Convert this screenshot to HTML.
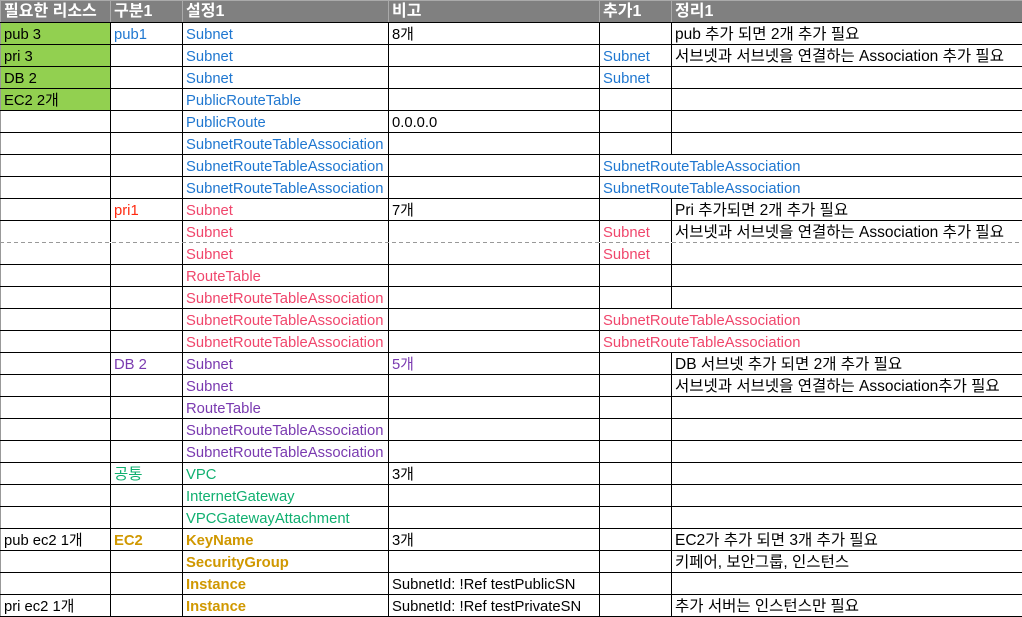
<!DOCTYPE html>
<html><head><meta charset="utf-8"><style>
body{margin:0;width:1022px;height:616px;overflow:hidden;background:#fff;font-family:"Liberation Sans","Noto Sans CJK KR",sans-serif;}
table{border-collapse:collapse;table-layout:fixed;position:absolute;left:0;top:0;width:1022px;}
td{height:22px;padding:3px 0 0 3px;box-sizing:border-box;border:1px solid #000;font-size:14.8px;white-space:nowrap;overflow:visible;line-height:18px;color:#000;}
td:first-child{border-left:1px solid #999;}
tr.h td{background:#808080;color:#fff;font-weight:bold;font-size:16px;border-color:#aaa;border-bottom:1px solid #000;padding-top:1px;}
.g{background:#92d050;}
.b{color:#1f77d0}.p{color:#f0466c}.r{color:#ff2a10}.v{color:#7a3ab0}.gr{color:#10b070}.y{color:#d09800;font-weight:bold}
.nr{border-right:none}
.k{font-size:15.5px}
#dash{position:absolute;left:0;top:242px;width:1022px;height:1px;background:repeating-linear-gradient(90deg,#999 0 4px,#fff 4px 7px);}
</style></head><body>
<table>
<colgroup><col style="width:110px"><col style="width:72px"><col style="width:206px"><col style="width:211px"><col style="width:72px"><col style="width:351px"></colgroup>
<tr class="h"><td>필요한 리소스</td><td>구분1</td><td>설정1</td><td>비고</td><td>추가1</td><td>정리1</td></tr>
<tr><td class="g">pub 3</td><td class="b">pub1</td><td class="b">Subnet</td><td>8개</td><td></td><td class="k">pub 추가 되면 2개 추가 필요</td></tr>
<tr><td class="g">pri 3</td><td></td><td class="b">Subnet</td><td></td><td class="b">Subnet</td><td class="k">서브넷과 서브넷을 연결하는 Association 추가 필요</td></tr>
<tr><td class="g">DB 2</td><td></td><td class="b">Subnet</td><td></td><td class="b">Subnet</td><td></td></tr>
<tr><td class="g">EC2 2개</td><td></td><td class="b">PublicRouteTable</td><td></td><td></td><td></td></tr>
<tr><td></td><td></td><td class="b">PublicRoute</td><td>0.0.0.0</td><td></td><td></td></tr>
<tr><td></td><td></td><td class="b">SubnetRouteTableAssociation</td><td></td><td></td><td></td></tr>
<tr><td></td><td></td><td class="b">SubnetRouteTableAssociation</td><td></td><td class="b nr">SubnetRouteTableAssociation</td><td style="border-left:none"></td></tr>
<tr><td></td><td></td><td class="b">SubnetRouteTableAssociation</td><td></td><td class="b nr">SubnetRouteTableAssociation</td><td style="border-left:none"></td></tr>
<tr><td></td><td class="r">pri1</td><td class="p">Subnet</td><td>7개</td><td></td><td class="k">Pri 추가되면 2개 추가 필요</td></tr>
<tr><td></td><td></td><td class="p">Subnet</td><td></td><td class="p">Subnet</td><td class="k">서브넷과 서브넷을 연결하는 Association 추가 필요</td></tr>
<tr><td></td><td></td><td class="p">Subnet</td><td></td><td class="p">Subnet</td><td></td></tr>
<tr><td></td><td></td><td class="p">RouteTable</td><td></td><td></td><td></td></tr>
<tr><td></td><td></td><td class="p">SubnetRouteTableAssociation</td><td></td><td></td><td></td></tr>
<tr><td></td><td></td><td class="p">SubnetRouteTableAssociation</td><td></td><td class="p nr">SubnetRouteTableAssociation</td><td style="border-left:none"></td></tr>
<tr><td></td><td></td><td class="p">SubnetRouteTableAssociation</td><td></td><td class="p nr">SubnetRouteTableAssociation</td><td style="border-left:none"></td></tr>
<tr><td></td><td class="v">DB 2</td><td class="v">Subnet</td><td class="v">5개</td><td></td><td class="k">DB 서브넷 추가 되면 2개 추가 필요</td></tr>
<tr><td></td><td></td><td class="v">Subnet</td><td></td><td></td><td class="k">서브넷과 서브넷을 연결하는 Association추가 필요</td></tr>
<tr><td></td><td></td><td class="v">RouteTable</td><td></td><td></td><td></td></tr>
<tr><td></td><td></td><td class="v">SubnetRouteTableAssociation</td><td></td><td></td><td></td></tr>
<tr><td></td><td></td><td class="v">SubnetRouteTableAssociation</td><td></td><td></td><td></td></tr>
<tr><td></td><td class="gr k">공통</td><td class="gr">VPC</td><td>3개</td><td></td><td></td></tr>
<tr><td></td><td></td><td class="gr">InternetGateway</td><td></td><td></td><td></td></tr>
<tr><td></td><td></td><td class="gr">VPCGatewayAttachment</td><td></td><td></td><td></td></tr>
<tr><td>pub ec2 1개</td><td class="y">EC2</td><td class="y">KeyName</td><td>3개</td><td></td><td class="k">EC2가 추가 되면 3개 추가 필요</td></tr>
<tr><td></td><td></td><td class="y">SecurityGroup</td><td></td><td></td><td class="k">키페어, 보안그룹, 인스턴스</td></tr>
<tr><td></td><td></td><td class="y">Instance</td><td>SubnetId: !Ref testPublicSN</td><td></td><td></td></tr>
<tr><td>pri ec2 1개</td><td></td><td class="y">Instance</td><td>SubnetId: !Ref testPrivateSN</td><td></td><td class="k">추가 서버는 인스턴스만 필요</td></tr>
</table>
<div id="dash"></div>
</body></html>
